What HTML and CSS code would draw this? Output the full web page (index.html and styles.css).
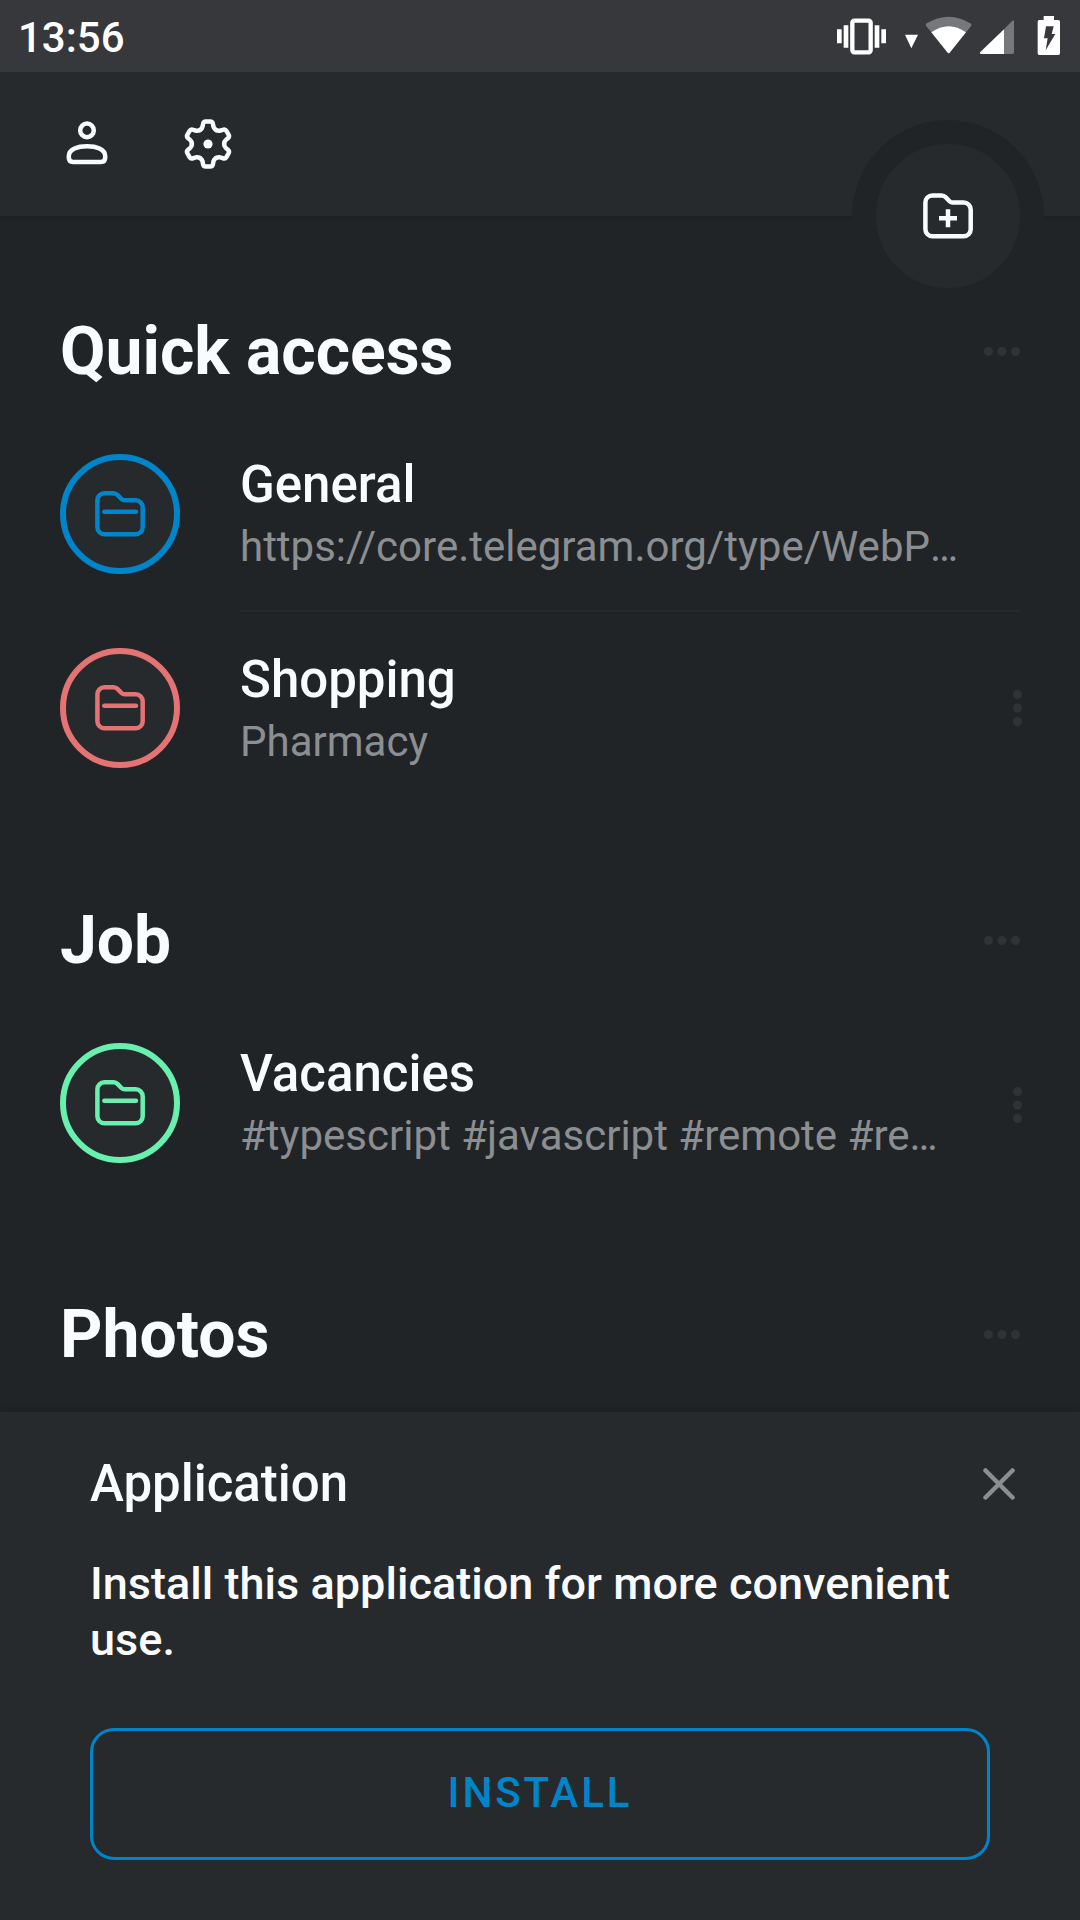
FILE: index.html
```html
<!DOCTYPE html>
<html lang="en">
<head>
<meta charset="utf-8">
<title>Folders</title>
<link rel="stylesheet" href="styles.css">
</head>
<body>
<svg class="defs" aria-hidden="true">
  <symbol id="folder" viewBox="-30 -30 60 60">
    <path d="M-22.6-13.7A7 7 0 0 1-15.6-20.7H-6.5Q-4-20.7-2.3-18.9L1.5-15Q2.8-13.7 4.8-13.7H15.7A7 7 0 0 1 22.7-6.7V13.3A7 7 0 0 1 15.7 20.3H-15.6A7 7 0 0 1-22.6 13.3Z"/>
    <path d="M-15.7-2.2H16" stroke-linecap="round"/>
  </symbol>
  <symbol id="more" viewBox="0 0 36 9">
    <circle cx="4.5" cy="4.5" r="4.5"/><circle cx="18" cy="4.5" r="4.5"/><circle cx="31.5" cy="4.5" r="4.5"/>
  </symbol>
  <symbol id="more-vertical" viewBox="0 0 9 36">
    <circle cx="4.5" cy="4.5" r="4.5"/><circle cx="4.5" cy="18" r="4.5"/><circle cx="4.5" cy="31.5" r="4.5"/>
  </symbol>
</svg>
<div class="screen">
  <div class="status">
    <span class="time">13:56</span>
    <svg class="status-icons" viewBox="0 0 780 216">
      <rect x="97" y="62" width="55" height="95" rx="6" fill="none" stroke="#fff" stroke-width="13"/>
      <path fill="#fff" d="M71 76h14v67H71zM51 88h14v42H51zM164 76h14v67h-14zM184 88h14v42h-14zM255 104h39l-20 41z"/>
      <path fill="#77787b" d="M389 157 454 77Q455 73 451 70 386 31 320 70 316 73 318 77L383 157Z"/>
      <path fill="#fff" d="M389 158Q386 161 383 158L334 97Q386 60 438 97Z"/>
      <path fill="#77787b" d="M552 88 577 62Q582 58 582 64V157Q582 162 577 162H552Z"/>
      <path fill="#fff" d="M552 88V162H484Q477 161 481 156Z"/>
      <path fill="#fff" d="M671 48h31v12h13q5 0 5 5v95q0 5-5 5h-57q-5 0-5-5V65q0-5 5-5h13z"/>
      <path fill="#36383c" d="M678 79h23l-6 23h11l-29 49 6-36h-11z"/>
    </svg>
  </div>
  <header class="header">
    <svg class="icon" viewBox="-30 -30 60 60">
      <circle cx="0" cy="-13.6" r="6.8"/>
      <path d="M-18.2 12.3C-18.2 5-9 2.3 0 2.3S18.2 5 18.2 12.3V13.5Q18.2 18 13.7 18H-13.7Q-18.2 18-18.2 13.5Z"/>
    </svg>
    <svg class="icon" viewBox="-30 -30 60 60" stroke-linecap="round">
      <defs><path id="tooth" d="M-8.1-14.03-7.5-14.4Q-5.8-15.5-5.5-17.3L-5-19.8Q-4.6-22.5-2.2-22.5H2.2Q4.6-22.5 5-19.8L5.5-17.3Q5.8-15.5 7.5-14.4L8.1-14.03"/></defs>
      <use href="#tooth"/><use href="#tooth" transform="rotate(60)"/><use href="#tooth" transform="rotate(120)"/><use href="#tooth" transform="rotate(180)"/><use href="#tooth" transform="rotate(240)"/><use href="#tooth" transform="rotate(300)"/>
      <circle class="dot" r="4.6"/>
    </svg>
    <div class="add">
      <svg class="icon" viewBox="-30 -30 60 60">
        <path d="M-22.6-13.4A7 7 0 0 1-15.6-20.6H-6.5Q-4-20.6-2.3-18.8L1.5-14.8Q2.8-13.4 4.8-13.4H15.7A7 7 0 0 1 22.7-6.4V13.3A7 7 0 0 1 15.7 20.3H-15.6A7 7 0 0 1-22.6 13.3Z"/>
        <path d="M-9 2.2H9M0-6.8V11.2"/>
      </svg>
    </div>
  </header>
  <main class="content">
    <section class="group">
      <div class="group-head"><h2>Quick access</h2><svg class="more"><use href="#more"/></svg></div>
      <div class="row blue">
        <div class="avatar"><svg class="icon"><use href="#folder"/></svg></div>
        <div class="body divided">
          <div class="texts"><div class="name">General</div><div class="sub">https://core.telegram.org/type/WebP<span class="cut">…</span></div></div>
        </div>
      </div>
      <div class="row red">
        <div class="avatar"><svg class="icon"><use href="#folder"/></svg></div>
        <div class="body">
          <div class="texts"><div class="name">Shopping</div><div class="sub">Pharmacy</div></div>
          <svg class="more-vertical"><use href="#more-vertical"/></svg>
        </div>
      </div>
    </section>
    <section class="group">
      <div class="group-head"><h2>Job</h2><svg class="more"><use href="#more"/></svg></div>
      <div class="row green">
        <div class="avatar"><svg class="icon"><use href="#folder"/></svg></div>
        <div class="body">
          <div class="texts"><div class="name">Vacancies</div><div class="sub">#typescript #javascript #remote #re<span class="cut">…</span></div></div>
          <svg class="more-vertical"><use href="#more-vertical"/></svg>
        </div>
      </div>
    </section>
    <section class="group">
      <div class="group-head"><h2>Photos</h2><svg class="more"><use href="#more"/></svg></div>
    </section>
  </main>
  <aside class="sheet">
    <div class="sheet-head">
      <h3>Application</h3>
      <svg class="close" viewBox="0 0 32 32"><path d="M2.5 2.5 29.5 29.5M29.5 2.5 2.5 29.5"/></svg>
    </div>
    <p>Install this application for more convenient use.</p>
    <button class="install">INSTALL</button>
  </aside>
</div>
</body>
</html>
```
FILE: styles.css
```css
* { box-sizing: border-box; }

body {
  margin: 0;
  background: #212427;
  color: #fafbfd;
  font-family: Roboto, sans-serif;
}

h2, h3, p { margin: 0; }
svg { display: block; flex: none; }
.defs { position: absolute; width: 0; height: 0; }

.screen {
  display: flex;
  flex-direction: column;
  width: 1080px;
  height: 1920px;
  overflow: hidden;
}

.status {
  flex: none;
  display: flex;
  justify-content: space-between;
  height: 72px;
  padding-left: 18px;
  background: #36383c;
}
.time { font-size: 42px; font-weight: 500; line-height: 75px; color: #fff; }
.status-icons { width: 260px; height: 72px; }

.header {
  flex: none;
  position: relative;
  display: flex;
  align-items: center;
  gap: 61px;
  height: 144px;
  padding-left: 57px;
  background: #262a2d;
  box-shadow: 0 3px 3px #1e2124;
}
.icon {
  width: 60px;
  height: 60px;
  fill: none;
  stroke: currentColor;
  stroke-width: 4.5;
}
.dot { fill: currentColor; stroke: none; }

/* Floating button, notched into the lower edge of the header */
.add {
  position: absolute;
  right: 36px;
  bottom: -96px;
  display: grid;
  place-items: center;
  width: 192px;
  height: 192px;
  border: 24px solid #212427;
  border-radius: 50%;
  background: #262a2d;
}

.content {
  flex: none;
  height: 1196px;
  padding: 96px 60px 0;
  overflow: hidden;
}
.group + .group { margin-top: 96px; }
.group:nth-child(2) { margin-top: 97px; }
.group-head {
  display: flex;
  align-items: center;
  justify-content: space-between;
  height: 78px;
  margin-bottom: 28px;
}
h2 { font-size: 66px; font-weight: 700; line-height: 78px; padding-top: 2px; }
.more { width: 36px; height: 9px; fill: #2f3336; }
.more-vertical { width: 9px; height: 36px; margin-right: -2px; fill: #2f3336; }

.row { display: flex; align-items: flex-start; gap: 60px; }
.avatar {
  flex: none;
  display: grid;
  place-items: center;
  width: 120px;
  height: 120px;
  margin-top: 36px;
  border: 6px solid;
  border-radius: 50%;
  background: #262a2d;
}
.blue .avatar { color: #0085cb; }
.red .avatar { color: #e57373; }
.green .avatar { color: #69f0ae; }
.body {
  flex: 1;
  display: flex;
  align-items: center;
  justify-content: space-between;
  height: 192px;
}
.texts { align-self: flex-start; padding-top: 37px; }
.red .texts { padding-top: 38px; }
.green .more-vertical { margin-top: 4px; }
.divided { height: 194px; border-bottom: 2px solid #262a2d; }
.name { font-size: 51px; font-weight: 500; line-height: 60px; margin-bottom: 7px; }
.sub { font-size: 42px; line-height: 50px; color: #8c8f92; white-space: nowrap; }
.cut { display: inline-block; }

.sheet {
  flex: 1;
  padding: 42px 65px 0 90px;
  background: #262a2d;
  box-shadow: 0 -3px 3px #1e2124;
}
.sheet-head {
  display: flex;
  align-items: center;
  justify-content: space-between;
  height: 60px;
}
h3 { font-size: 51px; font-weight: 500; line-height: 60px; }
.close { width: 32px; height: 32px; stroke: #8c8f92; stroke-width: 4.5; stroke-linecap: round; }
.sheet p {
  width: 900px;
  margin-top: 42px;
  font-size: 45px;
  font-weight: 500;
  line-height: 56px;
  letter-spacing: 0.03px;
}
.install {
  display: block;
  width: 900px;
  height: 132px;
  margin-top: 60px;
  padding: 0 0 3px;
  border: 3px solid #0085cb;
  border-radius: 24px;
  background: none;
  color: #0085cb;
  font: 500 42px Roboto, sans-serif;
  letter-spacing: 3px;
}
```
